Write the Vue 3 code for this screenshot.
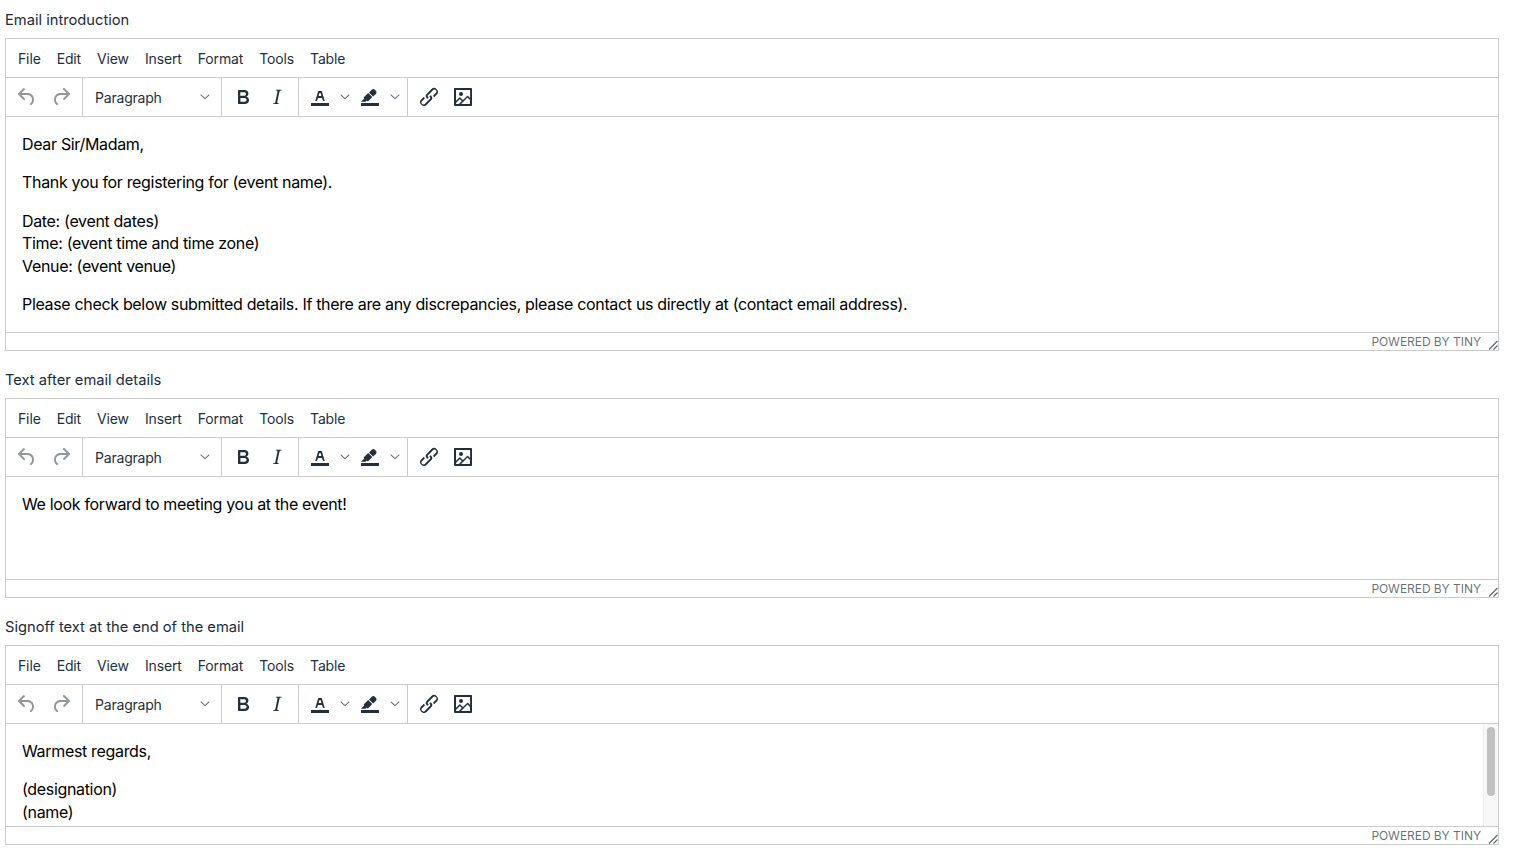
<script setup>
const menus = ['File', 'Edit', 'View', 'Insert', 'Format', 'Tools', 'Table']
const icons = {
  undo: 'M6.4 8H12c3.7 0 6.2 2 6.8 5.1.6 2.7-.4 5.6-2.3 6.8a1 1 0 0 1-1-1.8c1.1-.6 1.8-2.7 1.4-4.6-.5-2.1-2.1-3.5-4.9-3.5H6.4l3.3 3.3a1 1 0 1 1-1.4 1.4l-5-5a1 1 0 0 1 0-1.4l5-5a1 1 0 0 1 1.4 1.4L6.4 8Z',
  redo: 'M17.6 10H12c-2.8 0-4.4 1.4-4.9 3.5-.4 2 .3 4 1.4 4.6a1 1 0 1 1-1 1.8c-2-1.2-2.9-4.1-2.3-6.8.6-3 3-5.1 6.8-5.1h5.6l-3.3-3.3a1 1 0 1 1 1.4-1.4l5 5a1 1 0 0 1 0 1.4l-5 5a1 1 0 0 1-1.4-1.4l3.3-3.3Z',
  bold: 'M7.8 19c-.3 0-.5 0-.6-.2l-.2-.5V5.7c0-.2 0-.4.2-.5l.6-.2h5c1.5 0 2.7.3 3.5 1 .7.6 1.1 1.4 1.1 2.5a3 3 0 0 1-.6 1.9c-.4.6-1 1-1.6 1.2.4.1.9.3 1.3.6s.8.7 1 1.2c.4.4.5 1 .5 1.6 0 1.3-.4 2.3-1.3 3-.8.7-2.1 1-3.8 1H7.8Zm5-8.3c.6 0 1.2-.1 1.6-.5.4-.3.6-.7.6-1.3 0-1.1-.8-1.7-2.3-1.7H9.3v3.5h3.4Zm.5 6c.7 0 1.3-.1 1.7-.4.4-.4.6-.9.6-1.5s-.2-1-.7-1.4c-.4-.3-1-.4-2-.4H9.4v3.8h4Z',
  italic: 'M16.7 4.7l-.1.9h-.3c-.6 0-1 0-1.4.3-.3.3-.4.6-.5 1.1l-2.1 9.8v.6c0 .5.4.8 1.4.8h.2l-.2.8H8l.2-.8h.2c1.1 0 1.8-.5 2-1.5l2-9.8.1-.5c0-.6-.4-.8-1.4-.8h-.3l.2-.9h5.8Z',
  color: 'M3 18h18v3H3zM8.7 16h-.8a.5.5 0 0 1-.5-.6l2.7-9c.1-.3.3-.4.5-.4h2.8c.2 0 .4.1.5.4l2.7 9a.5.5 0 0 1-.5.6h-.8a.5.5 0 0 1-.4-.4l-.7-2.2c0-.3-.3-.4-.5-.4h-3.4c-.2 0-.4.1-.5.4l-.7 2.2c0 .3-.2.4-.4.4Zm2.6-7.6-.6 2a.5.5 0 0 0 .5.6h1.6a.5.5 0 0 0 .5-.6l-.6-2c0-.3-.3-.4-.5-.4h-.4c-.2 0-.4.1-.5.4Z',
  highlight: 'M3 18h18v3H3zM7.7 16.7H3l3.3-3.3-.7-.8L10.2 8l4 4.1-4 4.2c-.2.2-.6.2-.8 0l-.6-.7-1.1 1.1zm5-7.5L11 7.4l3-2.9a2 2 0 0 1 2.6 0L18 6c.7.7.7 2 0 2.7l-2.9 2.9-1.8-1.8-.5-.6',
  link: 'M6.2 12.3a1 1 0 0 1 1.4 1.4l-2 2a2 2 0 1 0 2.6 2.8l4.8-4.8a1 1 0 0 0 0-1.4 1 1 0 1 1 1.4-1.3 2.9 2.9 0 0 1 0 4L9.6 20a3.9 3.9 0 0 1-5.5-5.5l2-2Zm11.6-.6a1 1 0 0 1-1.4-1.4l2-2a2 2 0 1 0-2.6-2.8L11 10.3a1 1 0 0 0 0 1.4 1 1 0 1 1-1.4 1.3 2.9 2.9 0 0 1 0-4L14.4 4a3.9 3.9 0 0 1 5.5 5.5l-2 2Z',
  image: 'M5 15.7l3.3-3.2c.3-.3.7-.3 1 0L12 15l4.1-4c.3-.4.8-.4 1 0l2 1.9V5H5v10.7ZM5 18V19h3l2.8-2.9-2-2L5 17.9Zm14-3l-2.5-2.4-6.4 6.5H19v-4ZM4 3h16c.6 0 1 .4 1 1v16c0 .6-.4 1-1 1H4a1 1 0 0 1-1-1V4c0-.6.4-1 1-1Zm6 8a2 2 0 1 0 0-4 2 2 0 0 0 0 4Z'
}
const chevron = 'M.6.6a.5.5 0 0 1 .7 0L5 3.9 8.7.6a.5.5 0 0 1 .7.7l-4 3.6a.5.5 0 0 1-.8 0l-4-3.6a.5.5 0 0 1 0-.7Z'
const editors = [
  {
    label: 'Email introduction', height: 313, scroll: false,
    paragraphs: [
      ['Dear Sir/Madam,'],
      ['Thank you for registering for (event name).'],
      ['Date: (event dates)', 'Time: (event time and time zone)', 'Venue: (event venue)'],
      ['Please check below submitted details. If there are any discrepancies, please contact us directly at (contact email address).']
    ]
  },
  {
    label: 'Text after email details', height: 200, scroll: false,
    paragraphs: [['We look forward to meeting you at the event!']]
  },
  {
    label: 'Signoff text at the end of the email', height: 200, scroll: true,
    paragraphs: [['Warmest regards,'], ['(designation)', '(name)']]
  }
]
</script>

<template>
  <div class="page">
    <section v-for="ed in editors" :key="ed.label" class="field">
      <label class="label">{{ ed.label }}</label>
      <div class="editor" :style="{ height: ed.height + 'px' }">
        <div class="menubar">
          <span v-for="m in menus" :key="m" class="menu">{{ m }}</span>
        </div>
        <div class="toolbar">
          <div class="group">
            <span class="btn off"><svg width="24" height="24" viewBox="0 0 24 24"><path :d="icons.undo" /></svg></span>
            <span class="btn off"><svg width="24" height="24" viewBox="0 0 24 24"><path :d="icons.redo" /></svg></span>
          </div>
          <div class="group select-group">
            <span class="select">Paragraph</span>
            <svg class="chev" width="10" height="6" viewBox="0 0 10 6"><path :d="chevron" /></svg>
          </div>
          <div class="group">
            <span class="btn"><svg width="24" height="24" viewBox="0 0 24 24"><path :d="icons.bold" /></svg></span>
            <span class="btn"><svg width="24" height="24" viewBox="0 0 24 24"><path :d="icons.italic" /></svg></span>
          </div>
          <div class="group">
            <span class="btn"><svg width="24" height="24" viewBox="0 0 24 24"><path :d="icons.color" fill-rule="evenodd" /></svg></span>
            <span class="caret"><svg class="chev" width="10" height="6" viewBox="0 0 10 6"><path :d="chevron" /></svg></span>
            <span class="btn"><svg width="24" height="24" viewBox="0 0 24 24"><path :d="icons.highlight" /></svg></span>
            <span class="caret"><svg class="chev" width="10" height="6" viewBox="0 0 10 6"><path :d="chevron" /></svg></span>
          </div>
          <div class="group last">
            <span class="btn"><svg width="24" height="24" viewBox="0 0 24 24"><path :d="icons.link" /></svg></span>
            <span class="btn"><svg width="24" height="24" viewBox="0 0 24 24"><path :d="icons.image" fill-rule="evenodd" /></svg></span>
          </div>
        </div>
        <div class="content">
          <p v-for="(para, i) in ed.paragraphs" :key="i">
            <template v-for="(line, j) in para" :key="j"><br v-if="j > 0" />{{ line }}</template>
          </p>
          <div v-if="ed.scroll" class="scrollbar"><div class="thumb"></div></div>
        </div>
        <div class="status">
          <span class="brand">Powered by Tiny</span>
          <svg class="grip" width="10" height="10" viewBox="0 0 10 10">
            <path d="M9.5 1 1 9.5M9.5 5.5 5.5 9.5" stroke="#222f3e" stroke-opacity=".75" stroke-width="1.1" fill="none" />
          </svg>
        </div>
      </div>
    </section>
  </div>
</template>

<style scoped>
.page {
  width: 1494px;
  padding: 9px 0 13px 5px;
  font-family: Inter, "Liberation Sans", sans-serif;
  color: #222f3e;
}
.field { margin-bottom: 18px; }
.field:last-child { margin-bottom: 0; }
.label {
  display: block;
  height: 23px;
  line-height: 23px;
  margin-bottom: 6px;
  font-size: 14.7px;
  color: #1a2b3c;
}
.editor {
  box-sizing: border-box;
  display: flex;
  flex-direction: column;
  border: 1px solid #ccc;
  background: #fff;
  overflow: hidden;
}
.menubar {
  flex: none;
  box-sizing: border-box;
  height: 39px;
  padding: 1px 4px 0;
  display: flex;
  align-items: center;
  border-bottom: 1px solid #ccc;
}
.menu {
  padding: 0 8px;
  font-size: 14px;
  letter-spacing: -0.14px;
  line-height: 20px;
  color: #222f3e;
}
.toolbar {
  flex: none;
  box-sizing: border-box;
  height: 39px;
  display: flex;
  border-bottom: 1px solid #ccc;
}
.group {
  display: flex;
  align-items: center;
  padding: 0 4px;
  border-right: 1px solid #ccc;
}
.group.last { border-right: 0; }
.select-group {
  width: 139px;
  box-sizing: border-box;
  padding: 0 11px 0 12px;
  justify-content: space-between;
}
.select {
  font-size: 14px;
  letter-spacing: -0.2px;
  line-height: 20px;
  padding-top: 2px;
  color: #222f3e;
}
.btn {
  width: 34px;
  height: 34px;
  display: flex;
  align-items: center;
  justify-content: center;
}
.btn svg { fill: #222f3e; display: block; }
.btn.off svg { fill: rgba(34, 47, 62, 0.5); }
.caret {
  width: 16px;
  height: 34px;
  display: flex;
  align-items: center;
  justify-content: center;
}
.chev { fill: rgba(34, 47, 62, 0.7); display: block; }
.content {
  flex: 1;
  min-height: 0;
  position: relative;
  overflow: hidden;
  padding: 0 16px;
  font-size: 16px;
  letter-spacing: -0.33px;
  line-height: 22.4px;
  color: #000;
}
.content p { margin: 16px 0; }
.scrollbar {
  position: absolute;
  top: 0;
  right: 0;
  bottom: 0;
  width: 15px;
  box-sizing: border-box;
  border-left: 1px solid #ededed;
  background: #f8f8f8;
}
.thumb {
  position: absolute;
  top: 3px;
  left: 3px;
  width: 8px;
  height: 69px;
  border-radius: 4px;
  background: #c1c1c1;
}
.status {
  flex: none;
  box-sizing: border-box;
  height: 18px;
  display: flex;
  align-items: center;
  justify-content: flex-end;
  border-top: 1px solid #ccc;
  padding-right: 17px;
  position: relative;
}
.brand {
  font-size: 12px;
  letter-spacing: -0.05px;
  line-height: 17px;
  text-transform: uppercase;
  color: rgba(34, 47, 62, 0.7);
}
.grip {
  position: absolute;
  right: 0;
  bottom: 0;
}
</style>
